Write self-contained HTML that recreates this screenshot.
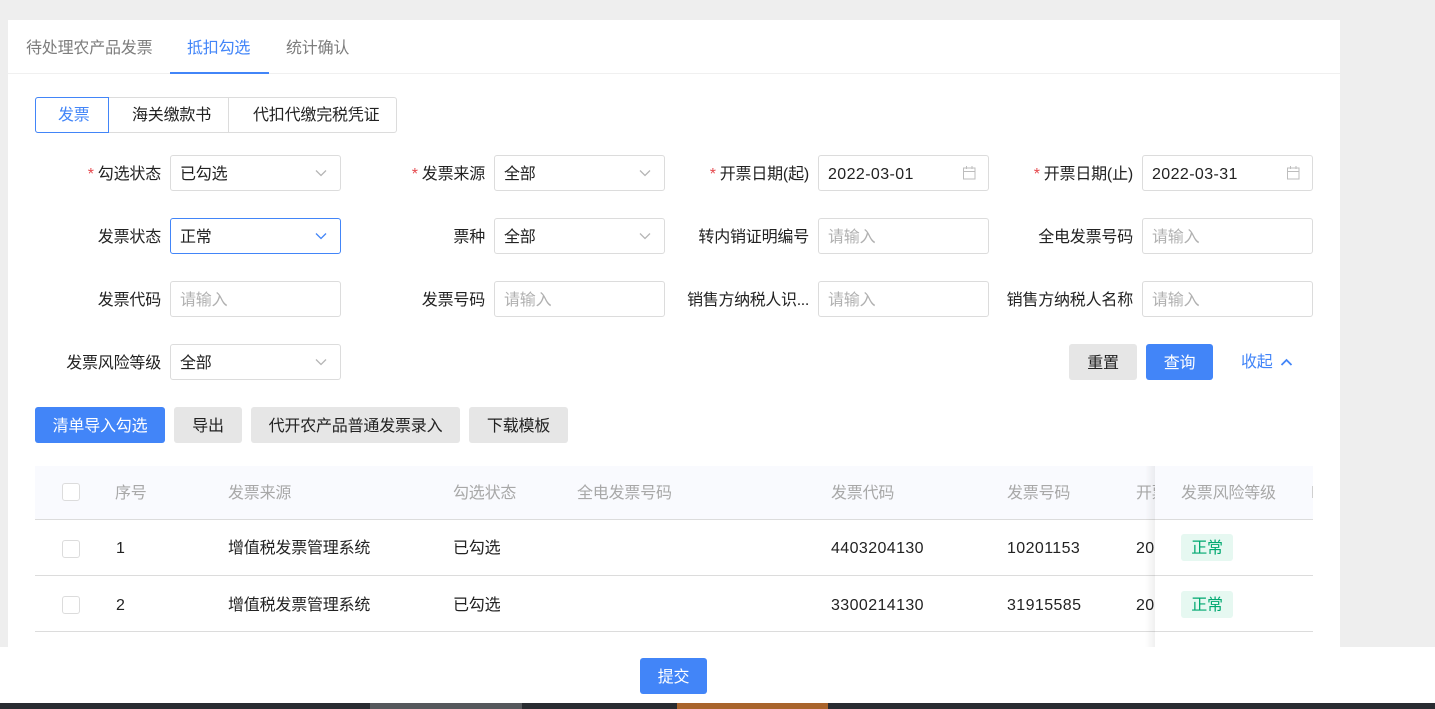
<!DOCTYPE html>
<html lang="zh-CN">
<head>
<meta charset="utf-8">
<title>抵扣勾选</title>
<style>
html,body{margin:0;padding:0}
body{width:1435px;height:709px;position:relative;overflow:hidden;background:#eee;font-family:"Liberation Sans","Noto Sans CJK SC",sans-serif;font-size:16px;color:#222;letter-spacing:-.2px}
div,span{box-sizing:border-box}
.a{position:absolute}
.t{position:absolute;white-space:nowrap;line-height:26px;height:24px}
.lb{position:absolute;white-space:nowrap;line-height:40px;height:36px;text-align:right;width:160px;color:#222}
.lb i{font-style:normal;color:#e5484d;margin-right:4px}
.in{position:absolute;width:171px;height:36px;background:#fff;border:1px solid #dcdcdc;border-radius:3px;line-height:38px;padding-left:9px;white-space:nowrap}
.ph{color:#b0b0b0}
.num{letter-spacing:.4px}
.btn{position:absolute;height:36px;line-height:40px;text-align:center;border-radius:3px;background:#e6e6e6;color:#222}
.pri{background:#4285f8;color:#fff}
.th{position:absolute;top:480px;line-height:28px;height:24px;color:#a8a8a8;white-space:nowrap}
.td{position:absolute;line-height:28px;height:24px;color:#222;white-space:nowrap}
.cb{position:absolute;width:18px;height:18px;background:#fff;border:1px solid #dcdcdc;border-radius:3px}
.ln{position:absolute;left:35px;width:1278px;height:1px;background:#dcdcdc}
.tag{position:absolute;left:1181px;width:52px;height:27px;line-height:29px;text-align:center;background:#e6f8f1;color:#00a870;border-radius:3px}
svg{position:absolute;display:block}
</style>
</head>
<body>
<div class="a" style="left:8px;top:20px;width:1332px;height:627px;background:#fff"></div>

<div class="a" style="left:8px;top:73px;width:1332px;height:1px;background:#f0f0f0"></div>
<span class="t" style="left:26px;top:36px;color:#7d7d7d">待处理农产品发票</span>
<span class="t" style="left:187px;top:36px;color:#4285f8">抵扣勾选</span>
<span class="t" style="left:286px;top:36px;color:#7d7d7d">统计确认</span>
<div class="a" style="left:170px;top:72px;width:99px;height:2px;background:#4285f8"></div>

<div class="a" style="left:35px;top:97px;width:362px;height:36px;border:1px solid #dcdcdc;border-radius:3px"></div>
<div class="a" style="left:228px;top:97px;width:1px;height:36px;background:#dcdcdc"></div>
<div class="a" style="left:35px;top:97px;width:74px;height:36px;border:1px solid #4285f8;border-radius:3px 0 0 3px"></div>
<span class="t" style="left:58px;top:103px;color:#4285f8">发票</span>
<span class="t" style="left:132px;top:103px">海关缴款书</span>
<span class="t" style="left:253px;top:103px">代扣代缴完税凭证</span>

<!-- row 1 -->
<div class="lb" style="left:1px;top:155px"><i>*</i>勾选状态</div>
<div class="in" style="left:170px;top:155px">已勾选</div>
<svg style="left:315px;top:168px" width="12" height="10" viewBox="0 0 12 10"><path d="M1 2.5 6 7.5 11 2.5" fill="none" stroke="#b5b5b5" stroke-width="1.3"/></svg>
<div class="lb" style="left:325px;top:155px"><i>*</i>发票来源</div>
<div class="in" style="left:494px;top:155px">全部</div>
<svg style="left:639px;top:168px" width="12" height="10" viewBox="0 0 12 10"><path d="M1 2.5 6 7.5 11 2.5" fill="none" stroke="#b5b5b5" stroke-width="1.3"/></svg>
<div class="lb" style="left:649px;top:155px"><i>*</i>开票日期(起)</div>
<div class="in num" style="left:818px;top:155px">2022-03-01</div>
<svg style="left:962px;top:165px" width="15" height="15" viewBox="0 0 15 15"><path d="M1.5 3h11.5v11h-11.5zM1.5 6.5h11.5M4.5 1v3M10 1v3" fill="none" stroke="#bdbdbd" stroke-width="1"/></svg>
<div class="lb" style="left:973px;top:155px"><i>*</i>开票日期(止)</div>
<div class="in num" style="left:1142px;top:155px">2022-03-31</div>
<svg style="left:1286px;top:165px" width="15" height="15" viewBox="0 0 15 15"><path d="M1.5 3h11.5v11h-11.5zM1.5 6.5h11.5M4.5 1v3M10 1v3" fill="none" stroke="#bdbdbd" stroke-width="1"/></svg>

<!-- row 2 -->
<div class="lb" style="left:1px;top:218px">发票状态</div>
<div class="in" style="left:170px;top:218px;border-color:#4285f8">正常</div>
<svg style="left:315px;top:231px" width="12" height="10" viewBox="0 0 12 10"><path d="M1 2.5 6 7.5 11 2.5" fill="none" stroke="#4285f8" stroke-width="1.3"/></svg>
<div class="lb" style="left:325px;top:218px">票种</div>
<div class="in" style="left:494px;top:218px">全部</div>
<svg style="left:639px;top:231px" width="12" height="10" viewBox="0 0 12 10"><path d="M1 2.5 6 7.5 11 2.5" fill="none" stroke="#b5b5b5" stroke-width="1.3"/></svg>
<div class="lb" style="left:649px;top:218px">转内销证明编号</div>
<div class="in ph" style="left:818px;top:218px">请输入</div>
<div class="lb" style="left:973px;top:218px">全电发票号码</div>
<div class="in ph" style="left:1142px;top:218px">请输入</div>

<!-- row 3 -->
<div class="lb" style="left:1px;top:281px">发票代码</div>
<div class="in ph" style="left:170px;top:281px">请输入</div>
<div class="lb" style="left:325px;top:281px">发票号码</div>
<div class="in ph" style="left:494px;top:281px">请输入</div>
<div class="lb" style="left:649px;top:281px;letter-spacing:-.35px">销售方纳税人识...</div>
<div class="in ph" style="left:818px;top:281px">请输入</div>
<div class="lb" style="left:973px;top:281px">销售方纳税人名称</div>
<div class="in ph" style="left:1142px;top:281px">请输入</div>

<!-- row 4 -->
<div class="lb" style="left:1px;top:344px">发票风险等级</div>
<div class="in" style="left:170px;top:344px">全部</div>
<svg style="left:315px;top:357px" width="12" height="10" viewBox="0 0 12 10"><path d="M1 2.5 6 7.5 11 2.5" fill="none" stroke="#b5b5b5" stroke-width="1.3"/></svg>
<div class="btn" style="left:1069px;top:344px;width:68px">重置</div>
<div class="btn pri" style="left:1146px;top:344px;width:67px">查询</div>
<span class="t" style="left:1241px;top:350px;color:#4285f8">收起</span>
<svg style="left:1280px;top:357px" width="13" height="10" viewBox="0 0 13 10"><path d="M1.5 8 6.5 3 11.5 8" fill="none" stroke="#4285f8" stroke-width="1.8"/></svg>

<!-- toolbar -->
<div class="btn pri" style="left:35px;top:407px;width:130px">清单导入勾选</div>
<div class="btn" style="left:174px;top:407px;width:68px">导出</div>
<div class="btn" style="left:251px;top:407px;width:209px">代开农产品普通发票录入</div>
<div class="btn" style="left:469px;top:407px;width:99px">下载模板</div>

<!-- table -->
<div class="a" style="left:35px;top:466px;width:1278px;height:53px;background:#f9fafe"></div>
<div class="ln" style="top:519px"></div>
<div class="ln" style="top:575px"></div>
<div class="ln" style="top:631px"></div>

<div class="cb" style="left:62px;top:483px"></div>
<span class="th" style="left:115px">序号</span>
<span class="th" style="left:228px">发票来源</span>
<span class="th" style="left:453px">勾选状态</span>
<span class="th" style="left:577px">全电发票号码</span>
<span class="th" style="left:831px">发票代码</span>
<span class="th" style="left:1007px">发票号码</span>
<span class="th" style="left:1136px">开票日期</span>

<div class="cb" style="left:62px;top:540px"></div>
<span class="td" style="left:116px;top:535px">1</span>
<span class="td" style="left:228px;top:535px">增值税发票管理系统</span>
<span class="td" style="left:453px;top:535px">已勾选</span>
<span class="td num" style="left:831px;top:535px">4403204130</span>
<span class="td num" style="left:1007px;top:535px">10201153</span>
<span class="td num" style="left:1136px;top:535px">2022-03-01</span>

<div class="cb" style="left:62px;top:596px"></div>
<span class="td" style="left:116px;top:592px">2</span>
<span class="td" style="left:228px;top:592px">增值税发票管理系统</span>
<span class="td" style="left:453px;top:592px">已勾选</span>
<span class="td num" style="left:831px;top:592px">3300214130</span>
<span class="td num" style="left:1007px;top:592px">31915585</span>
<span class="td num" style="left:1136px;top:592px">2022-03-02</span>

<!-- fixed column -->
<div class="a" style="left:1145px;top:466px;width:10px;height:181px;background:linear-gradient(to right,rgba(0,0,0,0),rgba(0,0,0,.06))"></div>
<div class="a" style="left:1155px;top:466px;width:158px;height:181px;background:#fff"></div>
<div class="a" style="left:1155px;top:466px;width:158px;height:53px;background:#f9fafe"></div>
<div class="a" style="left:1155px;top:519px;width:158px;height:1px;background:#dcdcdc"></div>
<div class="a" style="left:1155px;top:575px;width:158px;height:1px;background:#dcdcdc"></div>
<div class="a" style="left:1155px;top:631px;width:158px;height:1px;background:#dcdcdc"></div>
<span class="th" style="left:1181px">发票风险等级</span>
<div class="a" style="left:1312px;top:486px;width:1px;height:12px;background:#d0d0d0"></div>
<div class="tag" style="top:534px">正常</div>
<div class="tag" style="top:591px">正常</div>

<!-- footer -->
<div class="a" style="left:0;top:647px;width:1435px;height:56px;background:#fff"></div>
<div class="btn pri" style="left:640px;top:658px;width:67px">提交</div>
<div class="a" style="left:0;top:703px;width:1435px;height:6px;background:#292c31"></div>
<div class="a" style="left:370px;top:703px;width:152px;height:6px;background:#55585c"></div>
<div class="a" style="left:677px;top:703px;width:151px;height:6px;background:#a9642c"></div>
</body>
</html>
